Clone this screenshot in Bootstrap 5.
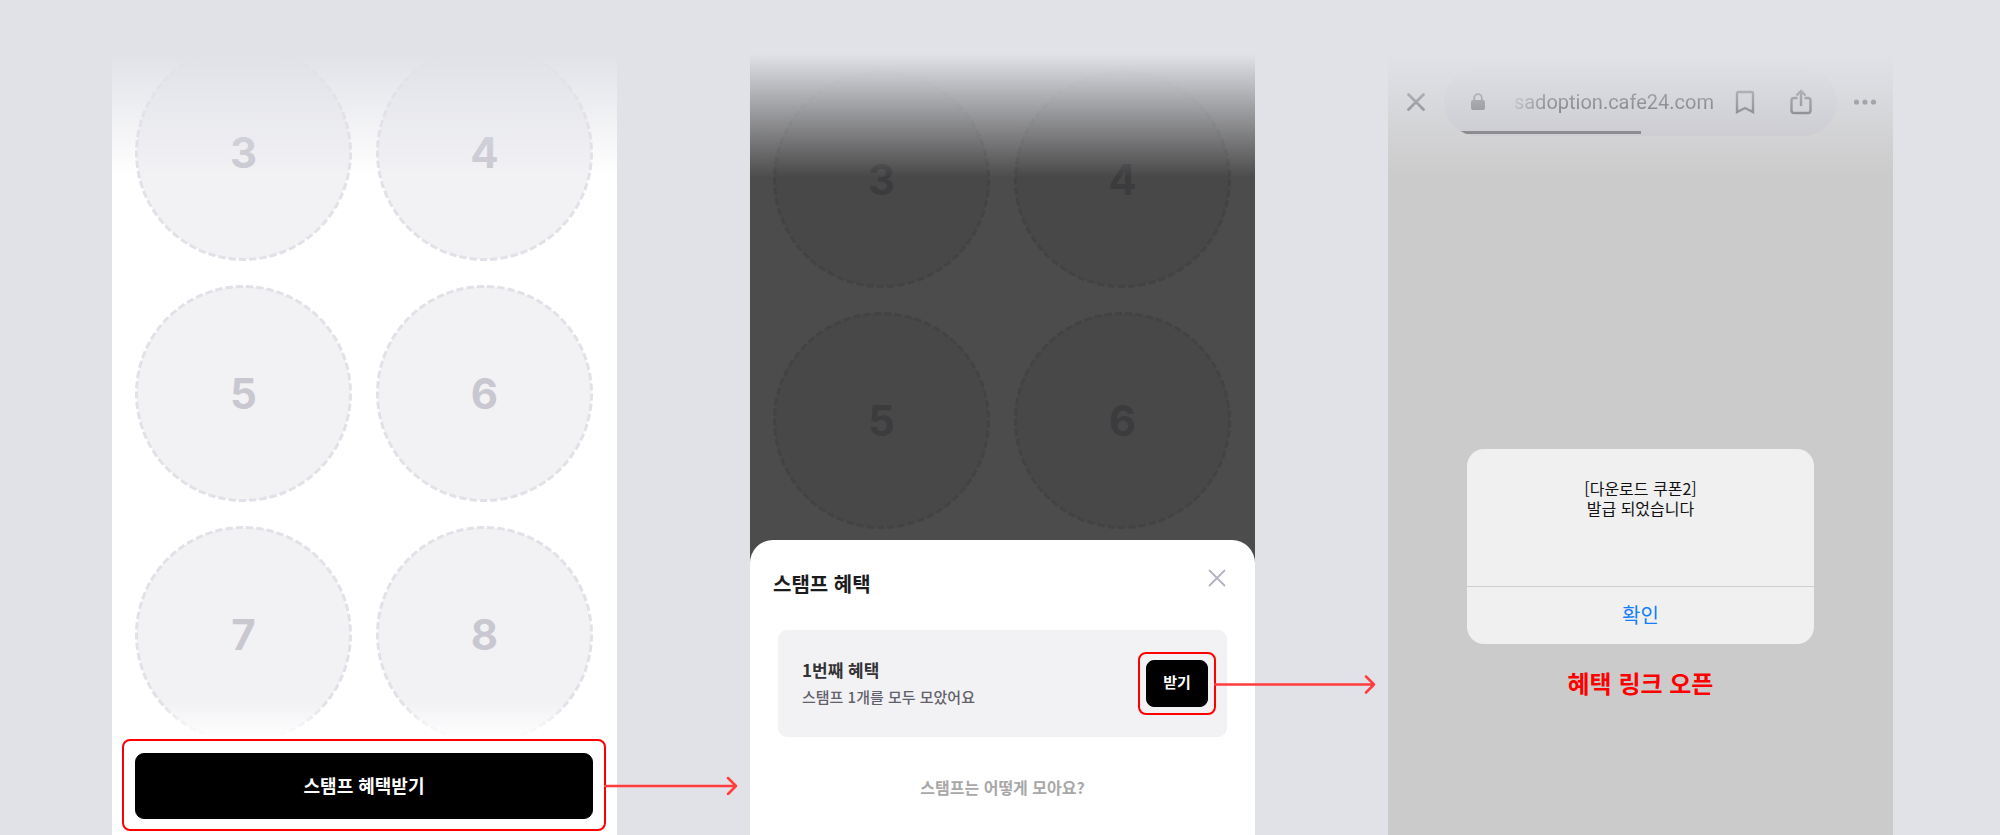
<!DOCTYPE html>
<html lang="ko">
<head>
<meta charset="utf-8">
<meta name="viewport" content="width=device-width, initial-scale=1">
<title>스탬프 혜택 안내</title>
<link href="https://cdn.jsdelivr.net/npm/bootstrap@5.3.0/dist/css/bootstrap.min.css" rel="stylesheet">
<style>
  :root { --canvas: #e1e2e8; --note: #ff0000; --arrow: #ff3d3d; }
  body { background: var(--canvas); font-family: "Noto Sans CJK KR", sans-serif; }
  .flow-board { gap: 133px; padding: 54px 107px 0 112px; }
  .phone { flex: 1 1 0; min-width: 0; }
  .top-fade { position: absolute; inset: 0 0 auto 0; height: 123px; pointer-events: none;
    background: linear-gradient(var(--canvas), rgba(225, 226, 232, 0)); }

  /* stamp grid */
  .stamp-grid { display: grid; grid-template-columns: 1fr 1fr; gap: 24px; }
  .stamp-grid-light { margin: -10px 24px -4px 23px; }
  .stamp-grid-dark { padding: 17px 24px 11px 23px; }
  .stamp { position: relative; aspect-ratio: 1; display: flex; align-items: center; justify-content: center;
    font: 700 42px/1 Inter, sans-serif; color: #c9c8d1; }
  .stamp svg { position: absolute; inset: 0; width: 100%; height: 100%;
    fill: #f2f2f5; stroke: #e3e1e8; stroke-width: 3; stroke-dasharray: 7 3; }
  .stamp span { position: relative; }
  .stamp-grid-dark .stamp { color: #3c3c3f; }
  .stamp-grid-dark svg { fill: #484848; stroke: #434345; }
  .bottom-fade { position: absolute; inset: auto 0 0 0; height: 36px;
    background: linear-gradient(rgba(255, 255, 255, 0), #fff); }

  /* highlighted controls and arrows */
  .callout { position: relative; border: 2px solid var(--note); border-radius: 8px; }
  .callout-cta { padding: 12px 11px 10px; }
  .callout-get { padding: 6px; }
  .arrow { position: absolute; left: 100%; top: 50%; transform: translateY(-50%); z-index: 2;
    fill: none; stroke: var(--arrow); stroke-width: 2.500; stroke-linecap: round; stroke-linejoin: round; }
  .cta-wrap { padding: 0 11px 4px 10px; }
  .btn-ink { --bs-btn-bg: #000; --bs-btn-color: #fff; --bs-btn-border-color: #000;
    --bs-btn-hover-bg: #222; --bs-btn-hover-color: #fff; font-weight: 700; padding: 0 0 2px; }
  .btn-cta { height: 66px; font-size: 18px; border-radius: 9px; }
  .btn-get { height: 47px; width: 62px; font-size: 15px; border-radius: 8px; }

  /* bottom sheet */
  .dimmed { background: #4c4c4c; }
  .sheet { border-radius: 23px 23px 0 0; }
  .sheet-head { padding: 24px 24px 0 23px; }
  .sheet-title { font-size: 20px; line-height: 39px; font-weight: 700; color: #1c1c1e; }
  .sheet-close { width: 28px; height: 28px; }
  .benefit { margin: 27px 28px 0; padding: 22px 11px 22px 24px; border-radius: 9px; background: #f2f2f4; }
  .benefit-name { font-size: 17px; line-height: 25px; font-weight: 700; color: #333336; }
  .benefit-note { font-size: 15px; line-height: 29px; font-weight: 500; color: #62616b; }
  .help-link { margin-top: 38px; font-size: 16px; line-height: 25px; font-weight: 700; color: #a8a8a8; }

  /* in-app browser */
  .browser { background: #cbcbcb; }
  .browser-bar { padding-top: 14px; }
  .bar-side { width: 56px; }
  .pill { min-width: 0; height: 68px; border-radius: 34px; background: #c2c2c7; padding: 0 14px 0 20px; overflow: hidden; }
  .pill-icon { width: 28px; }
  .pill-btn { width: 44px; height: 44px; }
  .pill-btn + .pill-btn { margin-left: 12px; }
  .address { font: 400 20px/24px Roboto, sans-serif; color: #1c1c1e; text-align: right; min-width: 0; width: 0;
    padding: 0 9px 0 0; background: none; border: 0; outline: 0;
    -webkit-mask-image: linear-gradient(90deg, transparent 10px, #000 56px); mask-image: linear-gradient(90deg, transparent 10px, #000 56px); }
  .load-bar { position: absolute; left: 0; bottom: 2px; width: 50%; height: 3px; background: #5c5c60; }
  .alert-box { margin: 313px 79px 0; border-radius: 17px; background: #f0f0f0; overflow: hidden; }
  .alert-text { padding: 29px 16px 68px; font-size: 16px; line-height: 20px; color: #111; }
  .alert-ok { height: 58px; padding: 0 0 2px; font-size: 20px; color: #147efb; border: 0; border-top: 1px solid #cfcfcf; background: none; }
  .caption-red { margin-top: 21px; font-size: 24px; line-height: 36px; font-weight: 700; color: var(--note); }
</style>
</head>
<body>
<svg class="d-none" aria-hidden="true">
  <symbol id="ring" viewBox="0 0 217 217"><circle cx="108.500" cy="108.500" r="107" pathLength="650"/></symbol>
</svg>

<main class="flow-board d-flex min-vh-100">

  <section class="phone bg-white d-flex flex-column">
    <div class="position-relative overflow-hidden">
      <div class="stamp-grid stamp-grid-light">
        <div class="stamp"><svg><use href="#ring"/></svg><span>3</span></div>
        <div class="stamp"><svg><use href="#ring"/></svg><span>4</span></div>
        <div class="stamp"><svg><use href="#ring"/></svg><span>5</span></div>
        <div class="stamp"><svg><use href="#ring"/></svg><span>6</span></div>
        <div class="stamp"><svg><use href="#ring"/></svg><span>7</span></div>
        <div class="stamp"><svg><use href="#ring"/></svg><span>8</span></div>
      </div>
      <div class="bottom-fade"></div>
      <div class="top-fade"></div>
    </div>
    <div class="cta-wrap">
      <div class="callout callout-cta">
        <button type="button" class="btn btn-ink btn-cta w-100">스탬프 혜택받기</button>
        <svg class="arrow" width="134" height="20" viewBox="0 0 134 20" aria-hidden="true"><path d="M0 11H132M124 3l8 8-8 8"/></svg>
      </div>
    </div>
  </section>

  <section class="phone dimmed d-flex flex-column position-relative">
    <div class="stamp-grid stamp-grid-dark">
      <div class="stamp"><svg><use href="#ring"/></svg><span>3</span></div>
      <div class="stamp"><svg><use href="#ring"/></svg><span>4</span></div>
      <div class="stamp"><svg><use href="#ring"/></svg><span>5</span></div>
      <div class="stamp"><svg><use href="#ring"/></svg><span>6</span></div>
    </div>
    <div class="top-fade"></div>
    <div class="sheet bg-white flex-grow-1">
      <div class="sheet-head d-flex justify-content-between align-items-start">
        <h2 class="sheet-title m-0">스탬프 혜택</h2>
        <button type="button" class="sheet-close btn border-0 p-0 d-flex align-items-center justify-content-center" aria-label="닫기">
          <svg width="18" height="18" viewBox="0 0 18 18" fill="none" stroke="#b5b3c3" stroke-width="1.800" stroke-linecap="round"><path d="M1.500 1.500l15 15M16.500 1.500l-15 15"/></svg>
        </button>
      </div>
      <div class="benefit d-flex justify-content-between align-items-center">
        <div>
          <div class="benefit-name">1번째 혜택</div>
          <div class="benefit-note">스탬프 1개를 모두 모았어요</div>
        </div>
        <div class="callout callout-get">
          <button type="button" class="btn btn-ink btn-get d-block">받기</button>
          <svg class="arrow" width="162" height="20" viewBox="0 0 162 20" aria-hidden="true"><path d="M0 10.500H160M152 2.500l8 8-8 8"/></svg>
        </div>
      </div>
      <a href="#" class="help-link d-block text-center text-decoration-none">스탬프는 어떻게 모아요?</a>
    </div>
  </section>

  <section class="phone browser position-relative">
    <div class="browser-bar d-flex align-items-center">
      <button type="button" class="bar-side btn border-0 p-0 flex-shrink-0" aria-label="닫기">
        <svg class="d-block mx-auto" width="18" height="18" viewBox="0 0 18 18" fill="none" stroke="#45454a" stroke-width="2.800" stroke-linecap="round"><path d="M1.500 1.500l15 15M16.500 1.500l-15 15"/></svg>
      </button>
      <div class="pill position-relative flex-grow-1 d-flex align-items-center">
        <div class="pill-icon flex-shrink-0">
          <svg class="d-block mx-auto" width="14" height="18" viewBox="0 0 14 18"><rect x="0" y="7" width="14" height="10" rx="2" fill="#4e4e53"/><path d="M3.200 8V5a3.800 3.800 0 0 1 7.600 0v3" fill="none" stroke="#4e4e53" stroke-width="1.800"/></svg>
        </div>
        <input class="address flex-grow-1" type="text" value="sadoption.cafe24.com" aria-label="주소" readonly>
        <button type="button" class="pill-btn btn border-0 p-0 flex-shrink-0" aria-label="북마크">
          <svg class="d-block mx-auto" width="20" height="24" viewBox="0 0 20 24" fill="none" stroke="#3c3c41" stroke-width="2.400"><path d="M2 22V3.500A1.500 1.500 0 0 1 3.500 2h13A1.500 1.500 0 0 1 18 3.500V22l-8-4z"/></svg>
        </button>
        <button type="button" class="pill-btn btn border-0 p-0 flex-shrink-0" aria-label="공유">
          <svg class="d-block mx-auto" width="22" height="26" viewBox="0 0 22 26" fill="none" stroke="#3c3c41" stroke-width="2.400"><path d="M7.500 9H4a2.500 2.500 0 0 0-2.500 2.500v10A2.500 2.500 0 0 0 4 24h14a2.500 2.500 0 0 0 2.500-2.500v-10A2.500 2.500 0 0 0 18 9h-3.500M11 17V2M6.500 6.500L11 2l4.500 4.500"/></svg>
        </button>
        <div class="load-bar"></div>
      </div>
      <button type="button" class="bar-side btn border-0 p-0 flex-shrink-0" aria-label="더보기">
        <svg class="d-block mx-auto" width="24" height="6" viewBox="0 0 24 6" fill="#45454a"><circle cx="3.500" cy="3" r="2.600"/><circle cx="12" cy="3" r="2.600"/><circle cx="20.500" cy="3" r="2.600"/></svg>
      </button>
    </div>
    <div class="top-fade"></div>
    <div class="alert-box text-center" role="alertdialog" aria-label="쿠폰 발급">
      <div class="alert-text">[다운로드 쿠폰2]<br>발급 되었습니다</div>
      <button type="button" class="alert-ok w-100">확인</button>
    </div>
    <div class="caption-red text-center">혜택 링크 오픈</div>
  </section>

</main>
<script src="https://cdn.jsdelivr.net/npm/bootstrap@5.3.0/dist/js/bootstrap.bundle.min.js"></script>
</body>
</html>
